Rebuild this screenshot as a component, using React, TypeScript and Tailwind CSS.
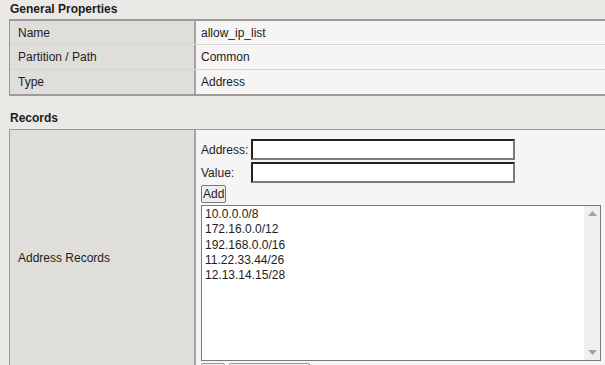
export default function App() {
  const general = [
    ["Name", "allow_ip_list", "h-[24px] border-b"],
    ["Partition / Path", "Common", "h-[25px] border-b"],
    ["Type", "Address", "h-[24px]"],
  ];
  const records = ["10.0.0.0/8", "172.16.0.0/12", "192.168.0.0/16", "11.22.33.44/26", "12.13.14.15/28"];

  return (
    <div className="w-[605px] h-[365px] overflow-hidden bg-[#ebe9e6] text-[12px] text-[#1c1c1c] font-['Liberation_Sans',Arial,sans-serif]">
      <div className="h-[19px] pl-[10px] font-bold leading-[18px]">General Properties</div>
      <div className="ml-[9px] w-[620px] border-t-2 border-b-2 border-l border-[#9b9b9b]">
        {general.map(([label, value, cls]) => (
          <div key={label} className={`flex ${cls} border-[#d6d5d2]`}>
            <div className="w-[186px] bg-[#dfdedb] border-r-2 border-[#a3a3a3] pl-[8px] flex items-center">{label}</div>
            <div className="flex-1 bg-[#f6f5f3] pl-[5px] flex items-center">{value}</div>
          </div>
        ))}
      </div>

      <div className="h-[20px] mt-[13px] pl-[10px] font-bold leading-[18px]">Records</div>
      <div className="ml-[9px] w-[620px] h-[256px] border-t border-l border-[#9b9b9b] flex">
        <div className="w-[186px] bg-[#dfdedb] border-r-2 border-[#a3a3a3] pl-[8px] flex items-center">Address Records</div>
        <div className="flex-1 bg-[#f6f5f3] pl-[5px] pt-[9px]">
          <div className="flex items-center h-[21px]">
            <span className="w-[50px]">Address:</span>
            <input className="w-[264px] h-[21px] bg-white border-2 border-t-[#222] border-l-[#222] border-b-[#7a7a7a] border-r-[#7a7a7a] outline-none" />
          </div>
          <div className="flex items-center h-[21px] mt-[2px]">
            <span className="w-[50px]">Value:</span>
            <input className="w-[264px] h-[21px] bg-white border-2 border-t-[#222] border-l-[#222] border-b-[#7a7a7a] border-r-[#7a7a7a] outline-none" />
          </div>
          <button className="mt-[2px] h-[18px] px-[1px] bg-[#efefef] border border-[#777] rounded-[2px] leading-[14px] text-[12px]">Add</button>
          <div className="mt-[2px] w-[400px] h-[156px] bg-white border border-[#7a7a7a] flex">
            <div className="flex-1 pl-[3px] pt-[1px] leading-[15.25px]">
              {records.map((r) => (
                <div key={r}>{r}</div>
              ))}
            </div>
            <div className="w-[16px] bg-[#f0f0f0] flex flex-col justify-between items-center py-[5px]">
              <svg width="9" height="5" viewBox="0 0 9 5"><path d="M0 5 L4.5 0 L9 5 Z" fill="#a3a3a3" /></svg>
              <svg width="9" height="5" viewBox="0 0 9 5"><path d="M0 0 L4.5 5 L9 0 Z" fill="#a3a3a3" /></svg>
            </div>
          </div>
          <div className="flex gap-[4px] mt-[2px]">
            <div className="w-[24px] h-[10px] border border-[#999] rounded-[2px] bg-[#efefef]" />
            <div className="w-[81px] h-[10px] border border-[#999] rounded-[2px] bg-[#efefef]" />
          </div>
        </div>
      </div>
    </div>
  );
}
